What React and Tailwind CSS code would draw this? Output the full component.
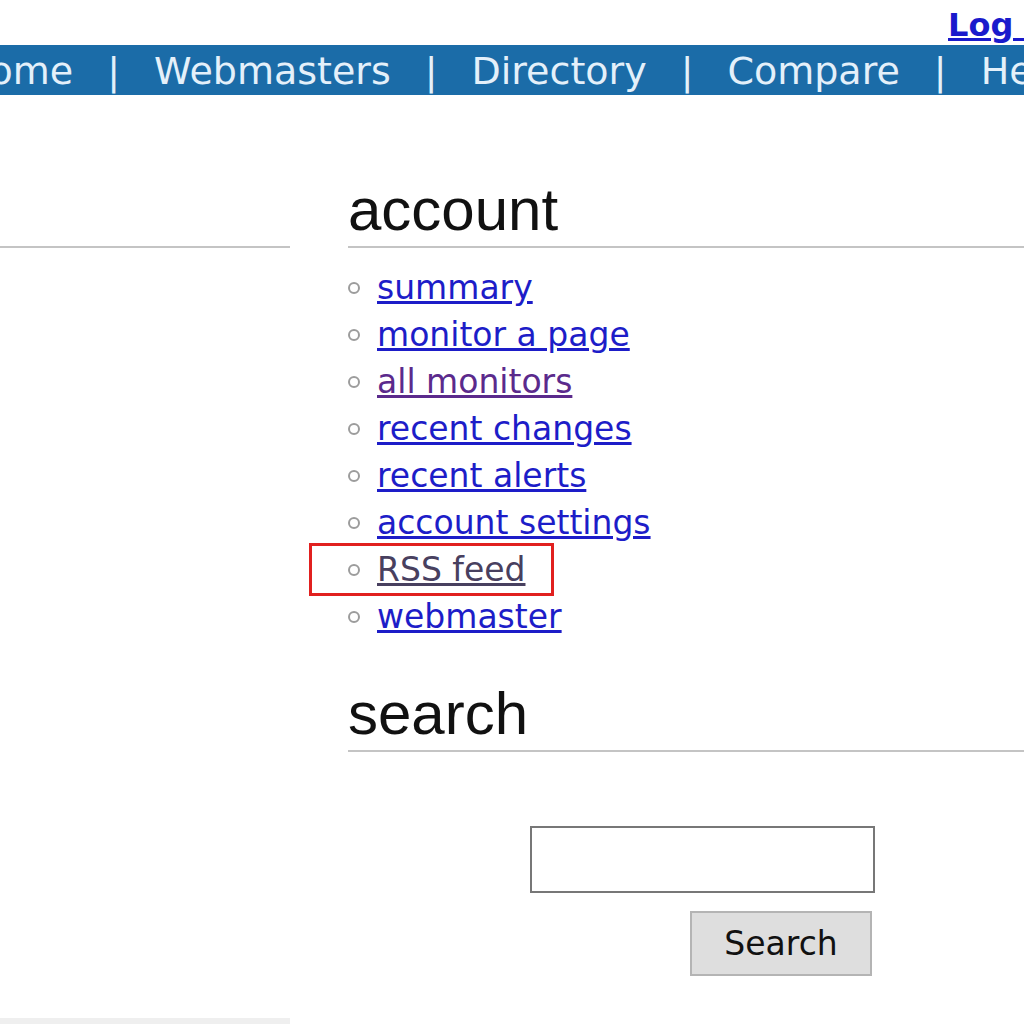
import React from 'react';

const NAV = ['Home', 'Webmasters', 'Directory', 'Compare', 'Help'];

const LINKS = [
  { label: 'summary', color: 'text-[#1d1dc8]' },
  { label: 'monitor a page', color: 'text-[#1d1dc8]' },
  { label: 'all monitors', color: 'text-[#5b2a8c]' },
  { label: 'recent changes', color: 'text-[#1d1dc8]' },
  { label: 'recent alerts', color: 'text-[#1d1dc8]' },
  { label: 'account settings', color: 'text-[#1d1dc8]' },
  { label: 'RSS feed', color: 'text-[#48405f]', marked: true },
  { label: 'webmaster', color: 'text-[#1d1dc8]' },
];

const verdana = "font-['DejaVu_Sans','Verdana',sans-serif]";
const arial = "font-['Liberation_Sans','Arial',sans-serif]";

function App() {
  return (
    <div className="w-[1024px] h-[1024px] overflow-hidden bg-white flex flex-col">
      {/* top strip with login link */}
      <div className="h-[45px] shrink-0 flex items-end overflow-hidden whitespace-nowrap pl-[948px] pb-[4px]">
        <a href="#" className={`${verdana} text-[32px] leading-none font-bold text-[#1a1acc] underline`}>Log in</a>
      </div>

      {/* nav bar */}
      <div className="h-[50px] shrink-0 bg-[#1b6ca8] flex items-center overflow-hidden whitespace-nowrap">
        <div className={`${verdana} flex items-center gap-[34px] ml-[-39px] mt-[2px] text-[38px] leading-none text-[#e4f0fa]`}>
          {NAV.map((n, i) => (
            <React.Fragment key={n}>
              {i > 0 && <span>|</span>}
              <span>{n}</span>
            </React.Fragment>
          ))}
        </div>
      </div>

      <div className="flex flex-1">
        {/* left column */}
        <div className="w-[290px] shrink-0 flex flex-col">
          <div className="mt-[151px] border-t-2 border-[#c4c4c4]" />
          <div className="mt-auto h-[6px] bg-[#efefef]" />
        </div>

        {/* right column */}
        <div className="flex-1 ml-[58px]">
          <h2 className={`${arial} mt-[85px] pb-[6px] text-[60px] leading-none text-[#111] border-b-2 border-[#c4c4c4]`}>account</h2>

          <ul className={`${verdana} mt-[16px] text-[33px] leading-[47px]`}>
            {LINKS.map((l) => (
              <li key={l.label} className="relative flex items-center">
                <span className="w-[12px] h-[12px] rounded-full border-2 border-[#9c9c9c] mr-[17px] shrink-0" />
                <a href="#" className={`${l.color} underline`}>{l.label}</a>
                {l.marked && (
                  <span className="absolute left-[-39px] top-[-3px] w-[245px] h-[53px] border-[3px] border-[#e1201f]" />
                )}
              </li>
            ))}
          </ul>

          <h2 className={`${arial} mt-[44px] pb-[6px] text-[60px] leading-none text-[#111] border-b-2 border-[#c4c4c4]`}>search</h2>

          <div className="ml-[182px] mt-[74px] flex flex-col">
            <input type="text" className="w-[345px] h-[67px] border-2 border-[#777] bg-white outline-none" />
            <button className={`${verdana} ml-[160px] mt-[18px] w-[182px] h-[65px] bg-[#dedede] border-2 border-[#b4b4b4] text-[33px] text-[#111]`}>
              Search
            </button>
          </div>
        </div>
      </div>
    </div>
  );
}

export default App;
